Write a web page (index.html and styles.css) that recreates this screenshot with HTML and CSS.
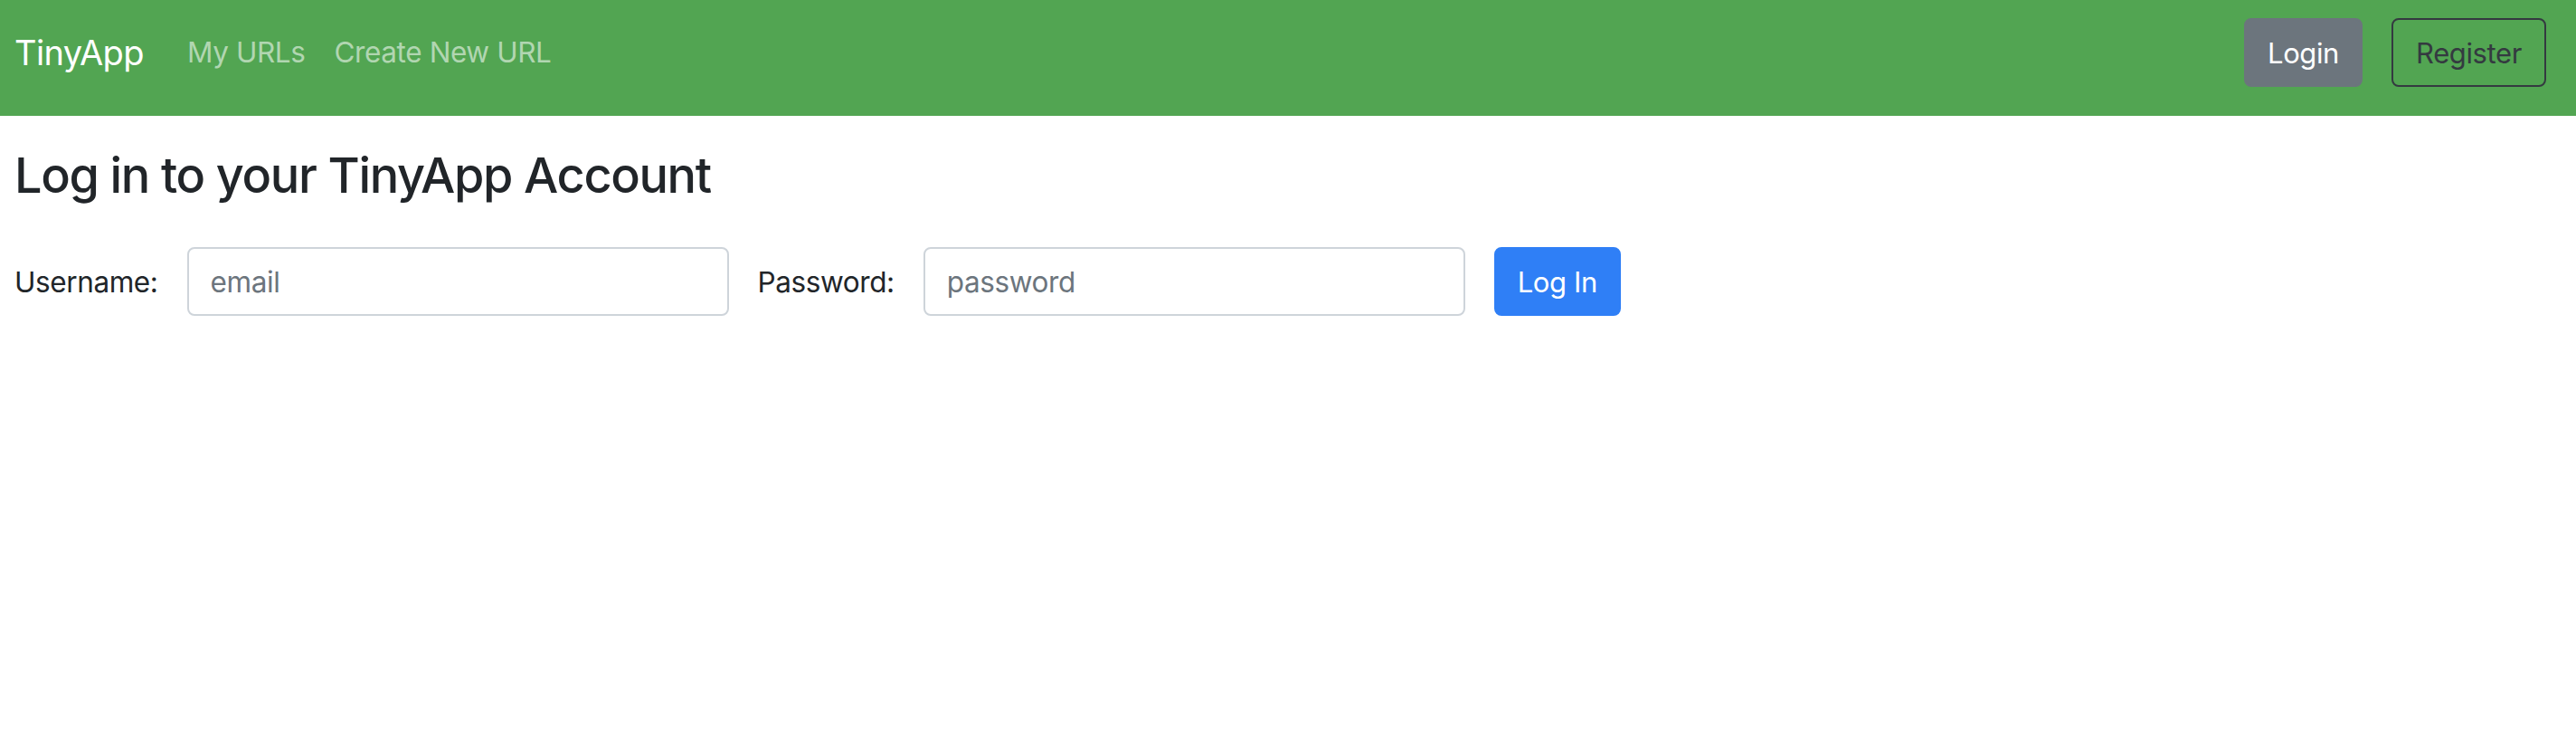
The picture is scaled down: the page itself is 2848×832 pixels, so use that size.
FILE: index.html
```html
<!DOCTYPE html>
<html lang="en">
<head>
<meta charset="utf-8">
<title>TinyApp</title>
<link rel="stylesheet" href="styles.css">
</head>
<body>
<nav class="navbar">
  <a class="brand" href="#">TinyApp</a>
  <div class="nav-links">
    <a class="nav-link" href="#">My URLs</a>
    <a class="nav-link" href="#">Create New URL</a>
  </div>
  <div class="nav-actions">
    <a class="btn btn-secondary" href="#">Login</a>
    <a class="btn btn-outline-dark" href="#">Register</a>
  </div>
</nav>
<main class="content">
  <h1 class="title">Log in to your TinyApp Account</h1>
  <form class="login-form">
    <label class="form-label" for="email">Username:</label>
    <input class="form-control" id="email" type="text" placeholder="email">
    <label class="form-label" for="password">Password:</label>
    <input class="form-control" id="password" type="password" placeholder="password">
    <button class="btn btn-primary" type="submit">Log In</button>
  </form>
</main>
</body>
</html>
```
FILE: styles.css
```css
* { box-sizing: border-box; }
html, body {
  margin: 0;
  padding: 0;
  background: #fff;
  color: #212529;
  font-family: Inter, "Noto Sans", "Liberation Sans", sans-serif;
}
a { text-decoration: none; }

.navbar {
  display: flex;
  align-items: center;
  height: 128px;
  padding: 20px 33px 32px 16px;
  background: #52a552;
}
.brand {
  color: #fff;
  font-size: 38px;
  line-height: 60px;
  margin-right: 32px;
  letter-spacing: -0.6px;
}
.nav-links {
  display: flex;
  flex: 1;
}
.nav-link {
  color: #b1d6b1;
  font-size: 31.5px;
  line-height: 48px;
  padding: 0 16px;
  letter-spacing: -0.4px;
}
.nav-actions {
  display: flex;
  gap: 32px;
}

.btn {
  display: inline-flex;
  align-items: center;
  justify-content: center;
  flex-shrink: 0;
  height: 76px;
  padding: 0;
  border: 2px solid transparent;
  border-radius: 8px;
  font-family: inherit;
  font-size: 31px;
  letter-spacing: -0.4px;
  white-space: nowrap;
  cursor: pointer;
}
.btn-secondary {
  background: #6c757d;
  border-color: #6c757d;
  color: #fff;
  width: 131px;
}
.btn-outline-dark {
  background: transparent;
  border-color: #343a40;
  color: #343a40;
  width: 171px;
}
.btn-primary {
  background: #2f7ff6;
  border-color: #2f7ff6;
  color: #fff;
  width: 140px;
}

.content {
  padding: 0 16px;
}
.title {
  margin: 0;
  padding-top: 34px;
  font-size: 54px;
  font-weight: 500;
  line-height: 64px;
  letter-spacing: -1.35px;
}
.login-form {
  display: flex;
  align-items: center;
  gap: 32px;
  margin-top: 47px;
}
.form-label {
  font-size: 31.5px;
  letter-spacing: -0.4px;
  white-space: nowrap;
}
.form-control {
  flex-shrink: 0;
  width: 599px;
  height: 76px;
  padding: 0 24px;
  border: 2px solid #ced4da;
  border-radius: 8px;
  font-family: inherit;
  font-size: 31.5px;
  color: #212529;
  letter-spacing: -0.4px;
}
.form-control::placeholder {
  color: #6c757d;
}
```
